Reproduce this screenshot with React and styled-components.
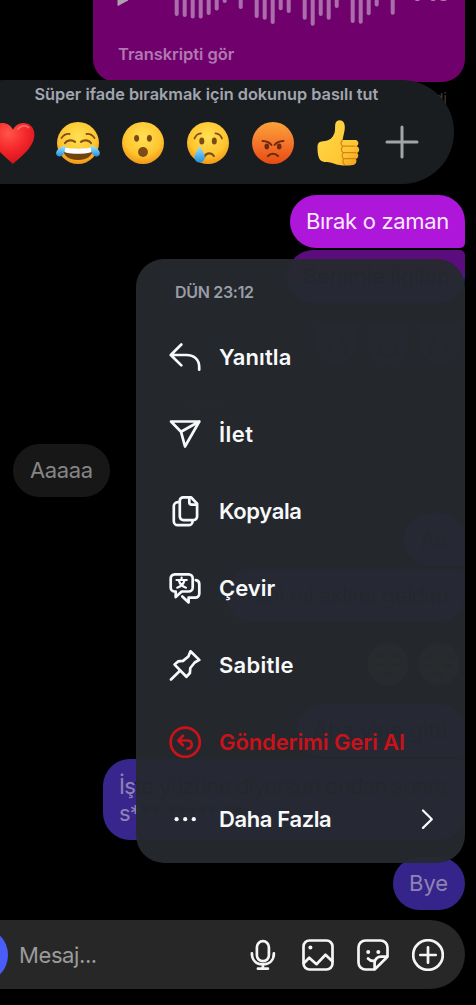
import React from "react";
import styled, { createGlobalStyle } from "styled-components";

const GlobalStyle = createGlobalStyle`
  *, *::before, *::after { box-sizing: border-box; }
  body { margin: 0; background: #000; overflow: hidden; }
`;

const Screen = styled.main`
  position: relative;
  display: flex;
  flex-direction: column;
  width: 476px;
  height: 1005px;
  overflow: hidden;
  background: #000;
  font-family: Inter, "Noto Sans", sans-serif;
`;

const Thread = styled.section`
  display: flex;
  flex-direction: column;
  align-items: flex-end;
  height: 920px;
  padding: 0 11px 0 13px;
`;

const VoiceBubble = styled.article`
  display: flex;
  flex-direction: column;
  flex: none;
  width: 372px;
  height: 82px;
  border-radius: 0 0 23px 23px;
  background: #70006c;
  color: #b078b0;
`;

const VoiceTrack = styled.div`
  display: flex;
  height: 43px;
  padding-left: 24px;
`;

const Duration = styled.span`
  margin: -15.5px 0 0 10px;
  font-size: 16.5px;
  line-height: 20px;
  font-weight: 500;
`;

const Transcript = styled.span`
  padding-left: 25px;
  font-size: 16.5px;
  line-height: 22px;
  font-weight: 600;
  letter-spacing: -0.05px;
`;

const Status = styled.span`
  height: 20px;
  margin: 7px 18px 0 0;
  font-size: 15px;
  line-height: 20px;
  color: #3c3c3c;
`;

const Bubble = styled.div`
  flex: none;
  align-self: ${(p) => (p.$incoming ? "flex-start" : "flex-end")};
  width: ${(p) => p.$w}px;
  height: ${(p) => p.$h || 53}px;
  margin-top: ${(p) => p.$gap}px;
  padding: ${(p) => p.$top || 13}px 0 0 ${(p) => p.$pad || 16}px;
  border-radius: ${(p) => p.$radius || "27px"};
  background: ${(p) => p.$bg || "#38268c"};
  color: ${(p) => p.$ink || "#0c0820"};
  font-size: 22px;
  line-height: 27px;
  letter-spacing: ${(p) => p.$track || 0}px;
  white-space: nowrap;
`;

const Visible = styled.span`
  color: #8f83b4;
`;

const EmojiLine = styled.div`
  display: flex;
  flex: none;
  gap: ${(p) => p.$space}px;
  margin-top: ${(p) => p.$gap}px;
  padding-right: 4px;
`;

const TimeMark = styled.time`
  align-self: flex-start;
  height: 18px;
  margin: 31px 0 0 173px;
  font-size: 15px;
  line-height: 18px;
  color: #2e2e2e;
`;

const ReactionBar = styled.div`
  position: absolute;
  top: 80px;
  left: -47px;
  width: 501px;
  height: 103.5px;
  padding-left: 38px;
  border-radius: 52px;
  background: #1a1d20;
`;

const Hint = styled.p`
  margin: 3px 0 0 43.5px;
  font-size: 16.3px;
  line-height: 22px;
  font-weight: 600;
  white-space: nowrap;
  color: #a2a6b0;
`;

const Reactions = styled.div`
  display: flex;
  align-items: center;
  gap: 21px;
  margin-top: 15.5px;
`;

const Menu = styled.nav`
  position: absolute;
  top: 259px;
  left: 136px;
  width: 329px;
  height: 604px;
  border-radius: 28px;
  background: rgba(38, 41, 46, 0.952);
`;

const MenuTime = styled.div`
  height: 59.5px;
  padding: 23px 0 0 39px;
  font-size: 16px;
  line-height: 20px;
  font-weight: 600;
  letter-spacing: -0.3px;
  color: #999da8;
`;

const MenuRow = styled.button`
  display: flex;
  align-items: center;
  gap: 18px;
  width: 100%;
  height: 77px;
  padding: 0 28px 0 33px;
  border: 0;
  background: none;
  color: ${(p) => (p.$danger ? "#c9121a" : "#f7f9fa")};
  font: 600 22px/28px Inter, "Noto Sans", sans-serif;
  letter-spacing: ${(p) => p.$track || 0}px;
  text-align: left;
`;

const Label = styled.span`
  flex: 1;
  white-space: nowrap;
`;

const Composer = styled.footer`
  display: flex;
  align-items: center;
  gap: 23px;
  flex: none;
  width: 520px;
  height: 69px;
  margin-left: -55px;
  padding: 0 21px 0 7px;
  border-radius: 35px;
  background: #272727;
  color: #f5f5f5;
`;

const CameraButton = styled.span`
  flex: none;
  width: 56px;
  height: 56px;
  margin-right: -12px;
  border-radius: 50%;
  background: #4a5df9;
`;

const Placeholder = styled.span`
  flex: 1;
  font-size: 22px;
  line-height: 28px;
  letter-spacing: -0.4px;
  color: #9b9b9b;
`;

const Glyph = styled.svg`
  display: block;
  flex: none;
  width: ${(p) => p.$size || 32}px;
  height: ${(p) => p.$size || 32}px;
  fill: none;
  stroke: currentColor;
  stroke-width: 2.7;
  stroke-linecap: round;
  stroke-linejoin: round;
`;

const AddGlyph = styled(Glyph)`
  margin: -1px 0 0 -1.5px;
  color: #a3a4a5;
`;

const Face = styled.svg`
  display: block;
  flex: none;
  width: 44px;
  height: 44px;
  overflow: visible;
`;

const icons = {
  reply: <path d="M12.3 3.5 1.8 14l10.500 10.400M2 14h15.500c8 0 12.700 5 12.700 12v2.700" />,
  send: <path d="M30.300 3.500H2l10 10.200 4 14.800ZM30.300 3.500 12 13.700" />,
  copy: (
    <>
      <path d="M14.300 2.300H22l6.100 6.300v13a3.500 3.500 0 0 1-3.500 3.500H14.300a3.500 3.500 0 0 1-3.500-3.500V5.800a3.500 3.500 0 0 1 3.500-3.500Z" />
      <path d="M20.300 2.800v4.400a2.400 2.400 0 0 0 2.400 2.400h4.900M10.600 7.200H8.800A4 4 0 0 0 4.800 11.200v15a4 4 0 0 0 4 4h10.800a4 4 0 0 0 4-4v-.8" />
    </>
  ),
  translate: (
    <>
      <path d="M5.700 2.300h14a4 4 0 0 1 4 4v9.200a4 4 0 0 1-4 4h-7l-6 5.500v-5.500h-1a4 4 0 0 1-4-4V6.300a4 4 0 0 1 4-4Z" />
      <path d="M26.800 8.200c2.300.3 3.500 1.800 3.500 4v9.400a4 4 0 0 1-4 4h-6.700v4.800l-6.300-6" />
      <path d="M7.500 8h10.300M12.600 5.600V8M15.500 8.400c-1 3.600-3.700 6.200-7.300 7.300M9.800 8.400c1 3.600 3.700 6.200 7.200 7.300" strokeWidth="2.2" />
    </>
  ),
  pin: <path d="m21.500 2.300 8.800 8.600-4.600 2.600-4.400 5.500-.4 5-3.500 3.700L5.600 15.600l3.500-3.200 4.900-.5 5.400-4.400ZM11.200 21.500 2 30.500" />,
  undo: (
    <>
      <circle cx="16.200" cy="16.200" r="14.600" />
      <path d="m14 9.800-4.700 4.700 4.700 4.700M9.600 14.500h8.800c2.800 0 4.300 1.600 4.300 3.900 0 2.500-1.600 4.100-4.300 4.300" />
    </>
  ),
  more: (
    <g fill="currentColor" stroke="none">
      <circle cx="7.600" cy="16.200" r="2.100" />
      <circle cx="16.200" cy="16.200" r="2.100" />
      <circle cx="24.800" cy="16.200" r="2.100" />
    </g>
  ),
  mic: (
    <>
      <rect x="9.900" y="2.200" width="12" height="20" rx="6" />
      <path d="M4.900 14.300c0 6.700 4.200 11.100 11 11.100s11-4.400 11-11.100M15.900 25.400v4M10.900 29.700h10" />
    </>
  ),
  image: (
    <>
      <rect x="1.500" y="1.500" width="29" height="29" rx="6" />
      <circle cx="8.400" cy="8.500" r="2" fill="currentColor" stroke="none" />
      <path d="m1.800 24.300 5.400-5.600 7.300 6.500 9-9.500 6.800 6.500" />
    </>
  ),
  sticker: (
    <>
      <path d="M17.600 30.500H8.500a7 7 0 0 1-7-7v-15a7 7 0 0 1 7-7h15a7 7 0 0 1 7 7v9.200L17.600 30.500V24a6.300 6.300 0 0 1 6.300-6.300h6.600" />
      <path d="M11 19.500c1.700 1.900 3.800 2.600 6.300 2.200" />
      <circle cx="11.200" cy="13" r="2" fill="currentColor" stroke="none" />
      <circle cx="21.300" cy="13" r="2" fill="currentColor" stroke="none" />
    </>
  ),
  add: (
    <>
      <circle cx="16" cy="16" r="14.800" />
      <path d="M8.300 16h15.400M16 8.300v15.400" />
    </>
  ),
};

const Icon = ({ name }) => <Glyph viewBox="0 0 32 32">{icons[name]}</Glyph>;

const Gradients = () => (
  <svg width="0" height="0" style={{ position: "absolute" }}>
    <defs>
      <radialGradient id="yellow" cx=".5" cy=".35" r=".68">
        <stop offset="0" stopColor="#ffe052" />
        <stop offset=".65" stopColor="#ffc52f" />
        <stop offset="1" stopColor="#ef9114" />
      </radialGradient>
      <linearGradient id="orange" x2="0" y2="1">
        <stop offset="0" stopColor="#fba33a" />
        <stop offset=".5" stopColor="#f5762b" />
        <stop offset="1" stopColor="#e64b12" />
      </linearGradient>
      <radialGradient id="red" cx=".4" cy=".25" r=".8">
        <stop offset="0" stopColor="#ff5648" />
        <stop offset=".5" stopColor="#f5282b" />
        <stop offset="1" stopColor="#cf101c" />
      </radialGradient>
      <linearGradient id="tear" x2="0" y2="1">
        <stop offset="0" stopColor="#a4e6ff" />
        <stop offset="1" stopColor="#2192dc" />
      </linearGradient>
      <linearGradient id="hand" x2="1" y2="1">
        <stop offset="0" stopColor="#ffda4c" />
        <stop offset=".7" stopColor="#ffc633" />
        <stop offset="1" stopColor="#ef9a1a" />
      </linearGradient>
    </defs>
  </svg>
);

const brow = { fill: "none", stroke: "#81501a", strokeWidth: 1.8, strokeLinecap: "round" };

const faces = {
  heart: (
    <>
      <path d="M22 43C16 37 .6 27 .6 13.500.6 6.500 5.400 2 11.400 2 16 2 20 4.600 22 8.800 24 4.600 28 2 32.600 2c6 0 10.800 4.500 10.800 11.500C43.400 27 28 37 22 43Z" fill="url(#red)" />
      <path d="M27 8c2-3 7-4.500 10.500-1.500" fill="none" stroke="#ff8d80" strokeWidth="2" strokeLinecap="round" opacity=".6" />
    </>
  ),
  joy: (
    <>
      <circle cx="22" cy="22" r="21" fill="url(#yellow)" />
      <path d="M5.500 17c2.500-3.500 5-4.500 8-4M38.500 17c-2.500-3.500-5-4.500-8-4" {...brow} />
      <path d="M9 22c2-3 7-3.600 10-1.200M25 20.800c3-2.400 8-1.800 10 1.200" {...brow} strokeWidth="2.200" />
      <path d="M6.500 26.500c10 2 21 2 31 0C37 35 31 39 22 39S7 35 6.500 26.500Z" fill="#70430f" />
      <path d="M7 26.500c10 1.500 20 1.500 30 0-.2 2-.8 3.500-1.800 4.800-8.500 2-18 2-26.400 0C7.800 30 7.200 28.500 7 26.500Z" fill="#fff" />
      <path d="M9.500 24.500C5 25.500-.6 29 .2 33c.8 3.500 6 3 7.600-.5 1-2.500 1.500-5 1.700-8ZM34.500 24.500c4.500 1 10.100 4.500 9.300 8.500-.8 3.500-6 3-7.600-.5-1-2.500-1.500-5-1.700-8Z" fill="url(#tear)" />
    </>
  ),
  wow: (
    <>
      <circle cx="22" cy="22" r="21" fill="url(#yellow)" />
      <g fill="#7b4b17">
        <ellipse cx="15.600" cy="17.300" rx="2.500" ry="3.400" />
        <ellipse cx="28.400" cy="17.300" rx="2.500" ry="3.400" />
        <ellipse cx="22" cy="31" rx="4.900" ry="5" />
      </g>
    </>
  ),
  cry: (
    <>
      <circle cx="22" cy="22" r="21" fill="url(#yellow)" />
      <path d="M8.500 17.500c1-3 3.500-5 6.500-5.200M29.500 12.300c3 .2 5.500 2.200 6.500 5.200" {...brow} />
      <ellipse cx="15.800" cy="20" rx="2.500" ry="3.500" fill="#7b4b17" />
      <ellipse cx="28.300" cy="20" rx="2.500" ry="3.500" fill="#7b4b17" />
      <path d="M18.500 35.500c2-4 7-4 9.300-.5" {...brow} strokeWidth="2.200" />
      <path d="M13.800 24.500c2 4.500 5 8.500 5 11.700a5.200 5.200 0 0 1-10.400 0c0-3.200 3.700-7.200 5.400-11.700Z" fill="url(#tear)" />
    </>
  ),
  angry: (
    <>
      <circle cx="22" cy="22" r="21" fill="url(#orange)" />
      <path d="M11.500 20c4 .2 7 1.200 9 4M32.500 20c-4 .2-7 1.200-9 4" {...brow} stroke="#6e2a0d" />
      <ellipse cx="15.800" cy="25.500" rx="2.300" ry="3" fill="#6e2a0d" />
      <ellipse cx="28.200" cy="25.500" rx="2.300" ry="3" fill="#6e2a0d" />
      <path d="M17 35c2.500-3 7.500-3 10 0" {...brow} stroke="#6e2a0d" strokeWidth="2.200" />
    </>
  ),
  thumb: (
    <>
      <path d="M1.500 26.500c0-4.500 2-6 5.500-6.200 6.500-.5 9.500-3 11.500-8.300 1-3 .3-6.500.8-9C20-.8 23.500-1.500 26-.2c3.500 2 3.300 8 1.800 13.200L26.500 19h13c3.300.3 4 5 1 6.200 3.500.8 3.500 5.800.4 6.800 2.300 1 1.700 5.300-1 6 1.500 2.500 0 5.500-3 6-7 1-14 .6-19-1.500C13 40.500 9 42 5.500 40 2 38 1.500 31 1.500 26.500Z" fill="url(#hand)" />
      <path d="M26.500 19c-2.500 3-1.500 5 .5 6.200h12M27 25.200c-2.500 2-2.200 5.400.5 6.500H40M27.500 31.700c-2 1.600-1.800 5 .5 6h11.500M28 37.700c-1.500 2-1 4.500.5 6" fill="none" stroke="#d58414" strokeWidth="1.200" strokeLinecap="round" />
    </>
  ),
  devil: (
    <g opacity=".5">
      <path d="M0 1c3 3 6 3 10 3 7-3 17-3 24 0 4 0 7 0 10-3 0 5-1 8-3 12 5 15-4 30-19 30S-2 28 3 13C1 9 0 6 0 1Z" fill="#2d2a80" />
      <path d="m10 16 8 4M34 16l-8 4M12 30c6 7 14 7 20 0M15 22v6M29 22v6" stroke="#000" strokeWidth="3" fill="none" />
    </g>
  ),
  pensive: (
    <g>
      <circle cx="22" cy="22" r="21" fill="#54501f" />
      <path d="M8 17c3-3 6-4 9-3M36 17c-3-3-6-4-9-3M9 22c3 2 6 2 9 0M26 22c3 2 6 2 9 0M17 33c3-2 7-2 10 0" stroke="#16140a" strokeWidth="2" fill="none" />
    </g>
  ),
};

const Emoji = ({ name }) => <Face viewBox="0 0 44 44">{faces[name]}</Face>;

const wave = [16, 17, 18.5, 18.5, 15, 10.5, 3, 0, 9, 0, 18, 19.7, 24, 10.3, 13, 0, 19.7, 25.7, 16, 19.7, 8, 0, 23, 23.7, 15.3, 6.5, 0, 14.7];

const Waveform = () => (
  <svg width="285" height="30" viewBox="0 0 285 30" fill="#aa6fab">
    <path d="M1 0v5.500L11 0Z" stroke="#b2a0b2" strokeWidth="1" fill="#b2a0b2" />
    {wave.map((h, i) => (h ? <rect key={i} x={57.7 + i * 8} y="-5" width="4" height={h + 5} rx="2" /> : null))}
  </svg>
);

const actions = [
  { icon: "reply", label: "Yanıtla", track: 0.1 },
  { icon: "send", label: "İlet", track: 0.45 },
  { icon: "copy", label: "Kopyala", track: -0.35 },
  { icon: "translate", label: "Çevir" },
  { icon: "pin", label: "Sabitle", track: 0.25 },
  { icon: "undo", label: "Gönderimi Geri Al", danger: true, track: -0.1 },
  { icon: "more", label: "Daha Fazla", opens: true, track: -0.38 },
];

export default function App() {
  return (
    <Screen>
      <GlobalStyle />
      <Gradients />
      <Thread>
        <VoiceBubble>
          <VoiceTrack>
            <Waveform />
            <Duration>0:08</Duration>
          </VoiceTrack>
          <Transcript>Transkripti gör</Transcript>
        </VoiceBubble>
        <Status>di</Status>
        <Bubble $w={175} $gap={85.5} $bg="#ae16da" $ink="#fbeafd" $radius="27px 27px 5px 27px" $track={-0.32}>Bırak o zaman</Bubble>
        <Bubble $w={178} $gap={2.5} $bg="linear-gradient(#5c0d7d 35%, #38268c 60%)" $radius="27px 5px 27px 27px" $track={-0.2}>Benimle ilgilen</Bubble>
        <EmojiLine $gap={18} $space={7}>
          <Emoji name="devil" />
          <Emoji name="devil" />
          <Emoji name="devil" />
        </EmojiLine>
        <TimeMark>02:18</TimeMark>
        <Bubble $incoming $w={97} $gap={30} $pad={17} $bg="#171717" $ink="#858585" $track={-0.4}>Aaaaa</Bubble>
        <Bubble $w={61} $gap={16} $radius="27px 27px 5px 27px">Aa</Bubble>
        <Bubble $w={239} $gap={3} $radius="27px 5px 27px 27px" $track={-0.55}>Yeni mi aklına geldim</Bubble>
        <EmojiLine $gap={20} $space={7}>
          <Emoji name="pensive" />
          <Emoji name="pensive" />
        </EmojiLine>
        <Bubble $w={168} $gap={18} $radius="27px 27px 5px 27px">Aha yine gitti</Bubble>
        <Bubble $w={362} $h={81} $gap={2} $top={14} $radius="27px 5px 27px 27px" $track={-0.75}>
          <Visible>İş</Visible>te yüzüne diyorsun ondan sonra
          <br />
          <Visible>s*</Visible>** ***** **
        </Bubble>
        <Bubble $w={72} $gap={17} $bg="#35258a" $ink="#8f83b4">Bye</Bubble>
      </Thread>
      <Composer>
        <CameraButton />
        <Placeholder>Mesaj...</Placeholder>
        <Icon name="mic" />
        <Icon name="image" />
        <Icon name="sticker" />
        <Icon name="add" />
      </Composer>
      <ReactionBar>
        <Hint>Süper ifade bırakmak için dokunup basılı tut</Hint>
        <Reactions>
          {["heart", "joy", "wow", "cry", "angry", "thumb"].map((n) => (
            <Emoji key={n} name={n} />
          ))}
          <AddGlyph viewBox="0 0 44 44" $size={44}>
            <path d="M22 7v30M7 22h30" strokeWidth="3" />
          </AddGlyph>
        </Reactions>
      </ReactionBar>
      <Menu>
        <MenuTime>DÜN 23:12</MenuTime>
        {actions.map((a) => (
          <MenuRow key={a.icon} $danger={a.danger} $track={a.track}>
            <Icon name={a.icon} />
            <Label>{a.label}</Label>
            {a.opens && (
              <Glyph viewBox="0 0 20 20" $size={20}>
                <path d="m6 1.500 8.800 8.700L6 18.900" strokeWidth="2.200" />
              </Glyph>
            )}
          </MenuRow>
        ))}
      </Menu>
    </Screen>
  );
}
